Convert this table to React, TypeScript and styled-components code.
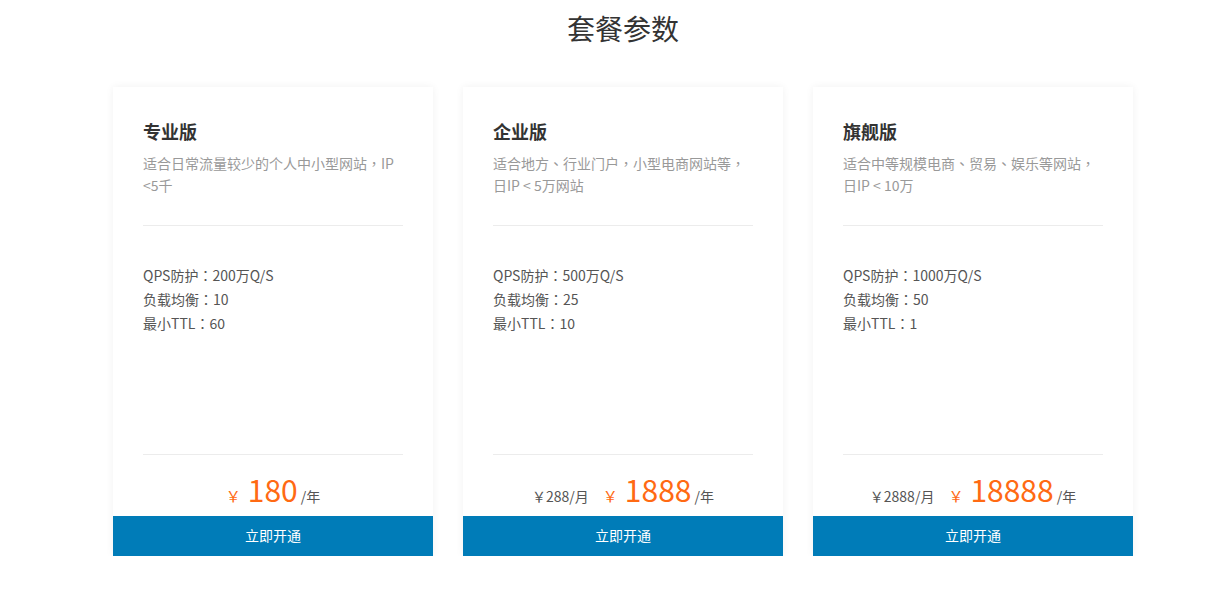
import React from "react";
import styled, { createGlobalStyle } from "styled-components";

const GlobalStyle = createGlobalStyle`
  html, body {
    margin: 0;
    padding: 0;
    background: #fff;
    font-family: "Noto Sans CJK SC", "Noto Sans", sans-serif;
  }
`;

const Wrapping = styled.div`
  width: 1020px;
  margin-left: 113px;
  padding-top: 8px;
  h2 {
    margin: 0;
    text-align: center;
    font-size: 28px;
    line-height: 40px;
    font-weight: normal;
    color: #333;
  }
`;

const CardList = styled.div`
  display: flex;
  gap: 30px;
  margin-top: 39px;
`;

// centred full-width punctuation, as the reference font draws it
const Punct = styled.span`
  font-family: "Noto Sans CJK TC", sans-serif;
`;

const Card = styled.div`
  width: 320px;
  background: #fff;
  box-shadow: 0 0 8px rgba(0, 0, 0, 0.06);
  display: flex;
  flex-direction: column;
  .card-head {
    margin: 0 30px;
    padding: 31px 0 29px;
    border-bottom: 1px solid #ececec;
    h3 {
      margin: 0;
      font-size: 18px;
      line-height: 26px;
      font-weight: bold;
      color: #333;
    }
    p {
      margin: 8px 0 0;
      font-size: 14px;
      line-height: 22px;
      color: #999;
      height: 44px;
    }
  }
  .card-body {
    margin: 0 30px;
    padding-top: 37px;
    height: 229px;
    box-sizing: border-box;
    border-bottom: 1px solid #ececec;
    li {
      list-style: none;
      font-size: 14px;
      line-height: 24px;
      color: #555;
    }
    ul {
      margin: 0;
      padding: 0;
    }
  }
`;

const PriceRow = styled.div`
  height: 61px;
  display: flex;
  justify-content: center;
  align-items: baseline;
  padding-top: 16px;
  box-sizing: border-box;
  font-size: 14px;
  color: #555;
  .month {
    margin-right: 14px;
  }
  .yen {
    color: #ff6a13;
    font-size: 15px;
    margin-right: 7px;
  }
  .amount {
    color: #ff6a13;
    font-size: 30px;
    line-height: 36px;
    margin-right: 3px;
  }
`;

const Button = styled.button`
  height: 40px;
  border: none;
  background: #007cb8;
  color: #fff;
  font-size: 14px;
  line-height: 38px;
  padding: 0 0 2px;
  font-family: inherit;
  cursor: pointer;
`;

type Plan = {
  name: string;
  desc: React.ReactNode[];
  qps: string;
  lb: number;
  ttl: number;
  month?: string;
  year: string;
};

const plans: Plan[] = [
  {
    name: "专业版",
    desc: [<>适合日常流量较少的个人中小型网站<Punct>，</Punct>IP</>, "<5千"],
    qps: "200万Q/S",
    lb: 10,
    ttl: 60,
    year: "180",
  },
  {
    name: "企业版",
    desc: [<>适合地方<Punct>、</Punct>行业门户<Punct>，</Punct>小型电商网站等<Punct>，</Punct></>, "日IP < 5万网站"],
    qps: "500万Q/S",
    lb: 25,
    ttl: 10,
    month: "288",
    year: "1888",
  },
  {
    name: "旗舰版",
    desc: [<>适合中等规模电商<Punct>、</Punct>贸易<Punct>、</Punct>娱乐等网站<Punct>，</Punct></>, "日IP < 10万"],
    qps: "1000万Q/S",
    lb: 50,
    ttl: 1,
    month: "2888",
    year: "18888",
  },
];

const App: React.FC = () => {
  return (
    <Wrapping>
      <GlobalStyle />
      <h2>套餐参数</h2>
      <CardList>
        {plans.map((p) => {
          return (
            <Card key={p.name}>
              <div className="card-head">
                <h3>{p.name}</h3>
                <p>
                  {p.desc[0]}
                  <br />
                  {p.desc[1]}
                </p>
              </div>
              <div className="card-body">
                <ul>
                  <li>QPS防护<Punct>：</Punct>{p.qps}</li>
                  <li>负载均衡<Punct>：</Punct>{p.lb}</li>
                  <li>最小TTL<Punct>：</Punct>{p.ttl}</li>
                </ul>
              </div>
              <PriceRow>
                {p.month && <span className="month">￥{p.month}/月</span>}
                <span className="yen">￥</span>
                <span className="amount">{p.year}</span>
                <span>/年</span>
              </PriceRow>
              <Button>立即开通</Button>
            </Card>
          );
        })}
      </CardList>
    </Wrapping>
  );
};

export default App;
